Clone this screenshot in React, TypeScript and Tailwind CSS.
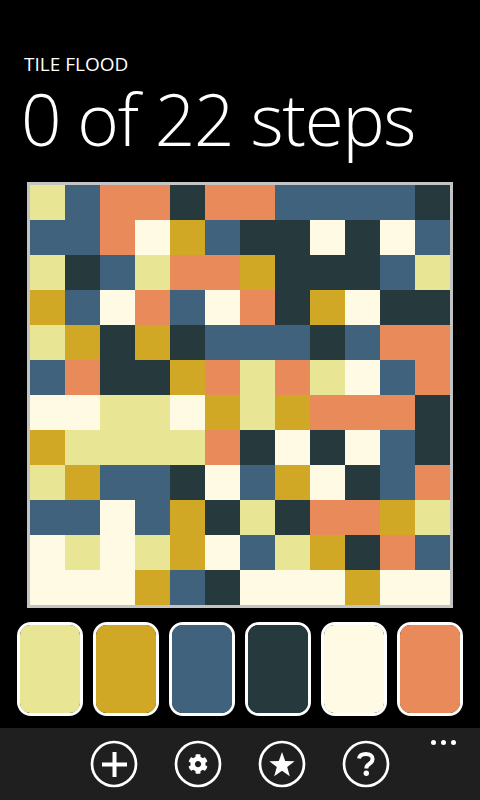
import { FaCog } from 'react-icons/fa';

const COLORS: Record<string, string> = {
  Y: 'bg-[#e8e595]',
  G: 'bg-[#d0a825]',
  B: 'bg-[#40627c]',
  D: 'bg-[#26393d]',
  W: 'bg-[#fffae4]',
  O: 'bg-[#e98a5b]',
};

const BOARD = [
  'YBOODOOBBBBD',
  'BBOWGBDDWDWB',
  'YDBYOOGDDDBY',
  'GBWOBWODGWDD',
  'YGDGDBBBDBOO',
  'BODDGOYOYWBO',
  'WWYYWGYGOOOD',
  'GYYYYODWDWBD',
  'YGBBDWBGWDBO',
  'BBWBGDYDOOGY',
  'WYWYGWBYGDOB',
  'WWWGBDWWWGWW',
];

const PICKS = ['Y', 'G', 'B', 'D', 'W', 'O'];

const RoundButton = ({ children }: { children: React.ReactNode }) => (
  <button type="button" className="relative flex h-[48px] w-[48px] items-center justify-center text-white">
    <svg className="absolute inset-0" width="48" height="48" viewBox="0 0 48 48" fill="none" stroke="white">
      <circle cx="24" cy="24" r="22" strokeWidth="2.7" />
    </svg>
    {children}
  </button>
);

export default function App() {
  return (
    <div className="flex h-[800px] w-[480px] flex-col overflow-hidden bg-black font-['Open_Sans',sans-serif] text-white">
      <header className="px-[24px] pt-[52px]">
        <p className="text-[19px] leading-[24px]">TILE FLOOD</p>
        <h1 className="-ml-[3px] mt-[1px] text-[71px] leading-[84px] font-light tracking-[-1.3px] whitespace-nowrap">
          0 of 22 steps
        </h1>
      </header>

      <div className="mx-[27px] mt-[21px] grid w-[426px] grid-cols-[repeat(12,35px)] border-[3px] border-[#c4c4c4]">
        {BOARD.flatMap((row, r) =>
          row.split('').map((c, i) => <div key={`${r}-${i}`} className={`h-[35px] ${COLORS[c]}`} />),
        )}
      </div>

      <div className="mt-[14px] flex justify-center gap-[10px]">
        {PICKS.map((c) => (
          <button
            key={c}
            type="button"
            className="h-[94px] w-[66px] rounded-[14px] border-[3px] border-white bg-black"
          >
            <span className={`block h-full w-full rounded-[10px] ${COLORS[c]}`} />
          </button>
        ))}
      </div>

      <footer className="relative mt-auto flex h-[72px] items-center justify-center gap-[36px] bg-[#1f1f1f]">
        <RoundButton>
          <svg width="25" height="25" viewBox="0 0 25 25" fill="white">
            <rect x="10.5" y="0" width="4" height="25" />
            <rect x="0" y="10.5" width="25" height="4" />
          </svg>
        </RoundButton>
        <RoundButton>
          <FaCog size={20} />
        </RoundButton>
        <RoundButton>
          <svg width="26" height="25" viewBox="0 0 26 25" fill="white">
            <polygon points="13,0 16.2,9 25.6,9.3 18.2,15 20.8,24.2 13,18.8 5.2,24.2 7.8,15 0.4,9.3 9.8,9" />
          </svg>
        </RoundButton>
        <RoundButton>
          <svg width="18" height="24" viewBox="0 0 18 24" fill="none" stroke="white">
            <path d="M2 6.5C2.5 3.6 5 2 8.8 2C13 2 15.6 4 15.6 7C15.6 9.6 14 10.8 12 12.2C10.2 13.4 9.3 14.4 9.3 16.6" strokeWidth="4" />
            <circle cx="9.3" cy="21.3" r="2.7" fill="white" stroke="none" />
          </svg>
        </RoundButton>
        <div className="absolute right-[24px] top-[12px] flex gap-[5px]">
          <span className="h-[5px] w-[5px] rounded-full bg-white" />
          <span className="h-[5px] w-[5px] rounded-full bg-white" />
          <span className="h-[5px] w-[5px] rounded-full bg-white" />
        </div>
      </footer>
    </div>
  );
}
